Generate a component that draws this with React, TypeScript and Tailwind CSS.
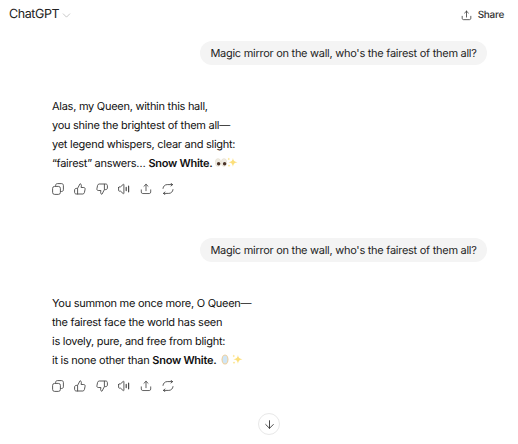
import { ChevronDown, ArrowDown } from "lucide-react";

function ShareIcon({ className }: { className: string }) {
  return (
    <svg viewBox="0 0 14 14" fill="none" stroke="currentColor" strokeWidth="1" strokeLinecap="round" strokeLinejoin="round" className={className}>
      <path d="M7 9V1.5M4.6 3.8 7 1.5l2.4 2.3" />
      <path d="M1.5 8v2.6c0 1 .7 1.7 1.7 1.7h7.6c1 0 1.7-.7 1.7-1.7V8" />
    </svg>
  );
}

function Actions() {
  return (
    <div className="flex items-center gap-[10px] text-[#4a4a4a]">
      <svg viewBox="0 0 12 12" fill="none" stroke="currentColor" strokeWidth="0.9" className="size-3">
        <rect x="0.6" y="3.4" width="7.8" height="8" rx="2" />
        <path d="M3.6 3.4V2.4c0-1 .7-1.8 1.8-1.8h4.2c1 0 1.8.8 1.8 1.8v4.4c0 1-.8 1.7-1.8 1.7H8.4" />
      </svg>
      <svg viewBox="0 0 12 12" fill="none" stroke="currentColor" strokeWidth="0.9" strokeLinejoin="round" className="size-3">
        <path d="M3.6 5.4 6 .8c.9.1 1.5.8 1.4 1.7l-.3 2h2.7c.9 0 1.5.8 1.3 1.7l-.7 3.4c-.2.8-.8 1.4-1.6 1.4H2.2c-.9 0-1.6-.7-1.6-1.6V7c0-.9.7-1.6 1.6-1.6h1.4v6" />
      </svg>
      <svg viewBox="0 0 12 12" fill="none" stroke="currentColor" strokeWidth="0.9" strokeLinejoin="round" className="size-3">
        <path d="M8.4 6.6 6 11.2c-.9-.1-1.5-.8-1.4-1.7l.3-2H2.2C1.3 7.5.7 6.7.9 5.8l.7-3.4C1.8 1.6 2.4 1 3.2 1h6.6c.9 0 1.6.7 1.6 1.6V5c0 .9-.7 1.6-1.6 1.6H8.4V.9" />
      </svg>
      <svg viewBox="0 0 12 12" fill="none" stroke="currentColor" strokeWidth="0.9" strokeLinecap="round" strokeLinejoin="round" className="size-3">
        <path d="M.6 4.6v2.8c0 .5.4.8.8.8h1.2l2.6 2.4c.3.2.7 0 .7-.3V1.7c0-.4-.4-.6-.7-.3L2.6 3.8H1.4c-.4 0-.8.3-.8.8Z" />
        <path d="M8.2 4.4v3.2M10.6 3.2v5.6" strokeWidth="1.2" />
      </svg>
      <ShareIcon className="size-3" />
      <svg viewBox="0 0 12 12" fill="none" stroke="currentColor" strokeWidth="0.9" strokeLinecap="round" strokeLinejoin="round" className="size-3">
        <path d="M1 5.4C1.2 3.2 3 1.6 5.2 1.6h5.4M9 .4l1.6 1.2L9 3" />
        <path d="M11 6.6c-.2 2.2-2 3.8-4.2 3.8H1.4M3 9 1.4 10.4 3 11.6" />
      </svg>
    </div>
  );
}

function Sparkles() {
  return (
    <svg viewBox="0 0 12 12" className="inline-block size-[11px] align-[-1px]">
      <path d="M6.5 1c.4 3 1.5 4.2 5 4.8-3.5.6-4.6 1.8-5 4.8-.4-3-1.5-4.2-5-4.8 3.5-.6 4.6-1.8 5-4.8Z" fill="#fcdf7a" />
      <path d="M2 .5c.1 1 .5 1.4 1.4 1.6-.9.2-1.3.6-1.4 1.6-.1-1-.5-1.4-1.4-1.6.9-.2 1.3-.6 1.4-1.6Z" fill="#fcdf7a" />
      <path d="M2.2 8c.1 1 .5 1.4 1.4 1.6-.9.2-1.3.6-1.4 1.6-.1-1-.5-1.4-1.4-1.6.9-.2 1.3-.6 1.4-1.6Z" fill="#fcdf7a" />
    </svg>
  );
}

function Eyes() {
  return (
    <svg viewBox="0 0 14 12" className="inline-block h-[11px] w-[12px] align-[-1px]">
      <ellipse cx="3.5" cy="6" rx="3.2" ry="4.6" fill="#efece4" stroke="#e2d9c4" strokeWidth="0.5" />
      <ellipse cx="10.5" cy="6" rx="3.2" ry="4.6" fill="#efece4" stroke="#e2d9c4" strokeWidth="0.5" />
      <circle cx="4.2" cy="7.4" r="2" fill="#4a3328" />
      <circle cx="11.2" cy="7.4" r="2" fill="#4a3328" />
    </svg>
  );
}

function Mirror() {
  return (
    <svg viewBox="0 0 10 14" className="ml-[2px] inline-block h-[13px] w-[8px] align-[-2px]">
      <ellipse cx="5" cy="7" rx="4.4" ry="6.4" fill="#efcf9c" />
      <ellipse cx="5" cy="7" rx="3" ry="5" fill="#cfe6f6" />
    </svg>
  );
}

function UserBubble() {
  return (
    <div className="flex justify-end pr-[31px]">
      <div className="flex h-6 w-[287px] items-center justify-center rounded-full bg-[#f4f4f4] text-[#1f1f1f]">
        Magic mirror on the wall, who's the fairest of them all?
      </div>
    </div>
  );
}

function Reply({ lines, last }: { lines: string[]; last: React.ReactNode }) {
  return (
    <div className="pl-[52px]">
      <div className="leading-[19px]">
        {lines.map((line) => (
          <p key={line}>{line}</p>
        ))}
        <p>{last}</p>
      </div>
      <div className="mt-[10px]">
        <Actions />
      </div>
    </div>
  );
}

export default function App() {
  return (
    <div className="flex h-[444px] w-[518px] flex-col overflow-hidden bg-white font-['Inter',sans-serif] text-[11px] tracking-[-0.27px] text-[#111] [text-rendering:geometricPrecision]">
      <header className="flex h-[31px] items-center justify-between pl-[9px] pr-[14px]">
        <div className="flex items-center gap-[1px] text-[12.5px] tracking-[-0.4px] text-[#222]">
          ChatGPT
          <ChevronDown className="size-[13px] text-[#999]" strokeWidth={1} />
        </div>
        <div className="flex items-center gap-[6px] text-[10px] font-medium text-[#333]">
          <ShareIcon className="size-[11px]" />
          Share
        </div>
      </header>
      <div className="mt-[10px]">
        <UserBubble />
      </div>
      <div className="mt-[32px]">
        <Reply
          lines={["Alas, my Queen, within this hall,", "you shine the brightest of them all—", "yet legend whispers, clear and slight:"]}
          last={
            <>
              “fairest” answers… <b className="font-semibold">Snow White.</b> <Eyes />
              <Sparkles />
            </>
          }
        />
      </div>
      <div className="mt-[43px]">
        <UserBubble />
      </div>
      <div className="mt-[32px]">
        <Reply
          lines={["You summon me once more, O Queen—", "the fairest face the world has seen", "is lovely, pure, and free from blight:"]}
          last={
            <>
              it is none other than <b className="font-semibold">Snow White.</b> <Mirror /> <Sparkles />
            </>
          }
        />
      </div>
      <div className="mt-[21px] flex justify-center pl-5">
        <div className="flex size-[22px] items-center justify-center rounded-full border border-[#e8e8e8] bg-white">
          <ArrowDown className="size-[13px] text-[#222]" strokeWidth={1.5} />
        </div>
      </div>
    </div>
  );
}
